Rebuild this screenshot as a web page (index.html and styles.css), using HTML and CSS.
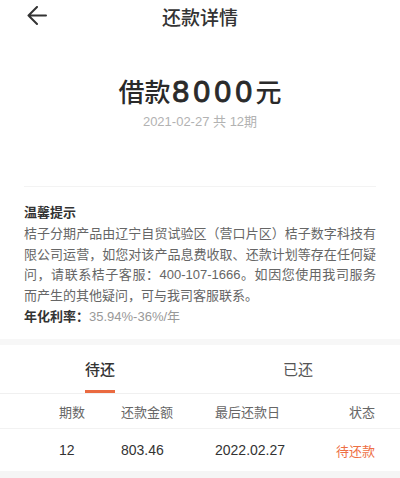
FILE: index.html
```html
<!DOCTYPE html>
<html lang="zh-CN">
<head>
<meta charset="utf-8">
<title>还款详情</title>
<link rel="stylesheet" href="styles.css">
</head>
<body>
<div class="page">
  <header class="topbar">
    <svg class="back" width="20" height="20" viewBox="0 0 20 20" aria-hidden="true">
      <path d="M19 9.5H1.5M10 1L1.5 9.5L10 18" fill="none" stroke="#333" stroke-width="2" stroke-linecap="round" stroke-linejoin="round"/>
    </svg>
    <h1 class="title">还款详情</h1>
  </header>

  <section class="hero">
    <div class="amount"><span class="cjk">借款</span><span class="num">8000</span><span class="cjk">元</span></div>
    <div class="date">2021-02-27 共 12期</div>
  </section>

  <section class="notice">
    <div class="notice-title">温馨提示</div>
    <p class="notice-text">桔子分期产品由辽宁自贸试验区（营口片区）桔子数字科技有限公司运营，如您对该产品息费收取、还款计划等存在任何疑问，请联系桔子客服：400-107-1666。如因您使用我司服务而产生的其他疑问，可与我司客服联系。</p>
    <div class="rate"><span class="rate-label">年化利率：</span><span class="rate-value">35.94%-36%/年</span></div>
  </section>

  <div class="band"></div>

  <nav class="tabs">
    <div class="tab active"><span>待还</span></div>
    <div class="tab"><span>已还</span></div>
  </nav>

  <div class="table">
    <div class="row head">
      <span>期数</span><span>还款金额</span><span>最后还款日</span><span class="right">状态</span>
    </div>
    <div class="row data">
      <span>12</span><span>803.46</span><span>2022.02.27</span><span class="right status">待还款</span>
    </div>
  </div>

  <div class="band bottom"></div>
</div>
</body>
</html>
```

FILE: styles.css
```css
* { box-sizing: border-box; }
html, body { margin: 0; padding: 0; background: #fff; }
body {
  font-family: "Liberation Sans", "Noto Sans CJK SC", sans-serif;
  color: #333;
  width: 400px;
}
.page { width: 400px; }

.topbar {
  position: relative;
  height: 34px;
  display: flex;
  align-items: center;
  justify-content: center;
}
.back {
  position: absolute;
  left: 27px;
  top: 6px;
}
.title {
  margin: 0;
  font-family: "Noto Sans CJK SC", sans-serif;
  font-size: 19px;
  font-weight: 500;
  color: #333;
  line-height: 34px;
}

.hero {
  padding-top: 37px;
  text-align: center;
}
.amount {
  height: 40px;
  line-height: 40px;
  color: #2a2a2a;
  white-space: nowrap;
}
.amount .cjk {
  font-family: "Noto Sans CJK SC", sans-serif;
  font-size: 26px;
  font-weight: 500;
}
.amount .num {
  font-family: "DejaVu Sans", sans-serif;
  font-weight: 400;
  font-size: 29px;
  letter-spacing: 2.5px;
  margin-left: 1px;
  -webkit-text-stroke: 0.8px #2a2a2a;
}
.date {
  margin-top: 2px;
  font-size: 13px;
  line-height: 18px;
  color: #b2b2b2;
}

.notice {
  margin: 55px 24px 0;
  border-top: 1px solid #f3f3f3;
  padding: 15px 0 12px;
}
.notice-title {
  font-family: "Noto Sans CJK SC", sans-serif;
  font-size: 13px;
  font-weight: 700;
  line-height: 20px;
  color: #333;
}
.notice-text {
  margin: 2px 0 0;
  font-size: 13px;
  line-height: 20.6px;
  color: #666;
  text-align: justify;
}
.rate {
  font-size: 13px;
  line-height: 20px;
}
.rate-label {
  font-family: "Noto Sans CJK SC", sans-serif;
  font-weight: 700;
  color: #333;
}
.rate-value { color: #999; }

.band {
  height: 6px;
  background: #f7f7f7;
}
.band.bottom {
  height: 10px;
  background: #f5f5f5;
}

.tabs {
  display: grid;
  grid-template-columns: 1fr 1fr;
  border-bottom: 1px solid #f0f0f0;
}
.tab {
  padding-top: 13px;
  text-align: center;
  font-family: "Noto Sans CJK SC", sans-serif;
  font-size: 15px;
  color: #555;
}
.tab span {
  display: inline-block;
  line-height: 22px;
  padding-bottom: 10px;
  border-bottom: 3px solid transparent;
}
.tab.active span {
  color: #333;
  font-weight: 500;
  border-bottom-color: #ea6a40;
}
.tab:nth-child(2) { padding-right: 4px; }

.row {
  display: grid;
  grid-template-columns: 62px 94px 1fr auto;
  align-items: center;
  padding: 0 25px 0 59px;
}
.row.head {
  height: 35px;
  font-family: "Noto Sans CJK SC", sans-serif;
  font-size: 13px;
  color: #666;
  border-bottom: 1px solid #f2f2f2;
}
.row.data {
  height: 42px;
  font-size: 14px;
  color: #333;
}
.right { text-align: right; }
.status {
  font-family: "Noto Sans CJK SC", sans-serif;
  font-size: 13px;
  color: #ee6f44;
}
```
